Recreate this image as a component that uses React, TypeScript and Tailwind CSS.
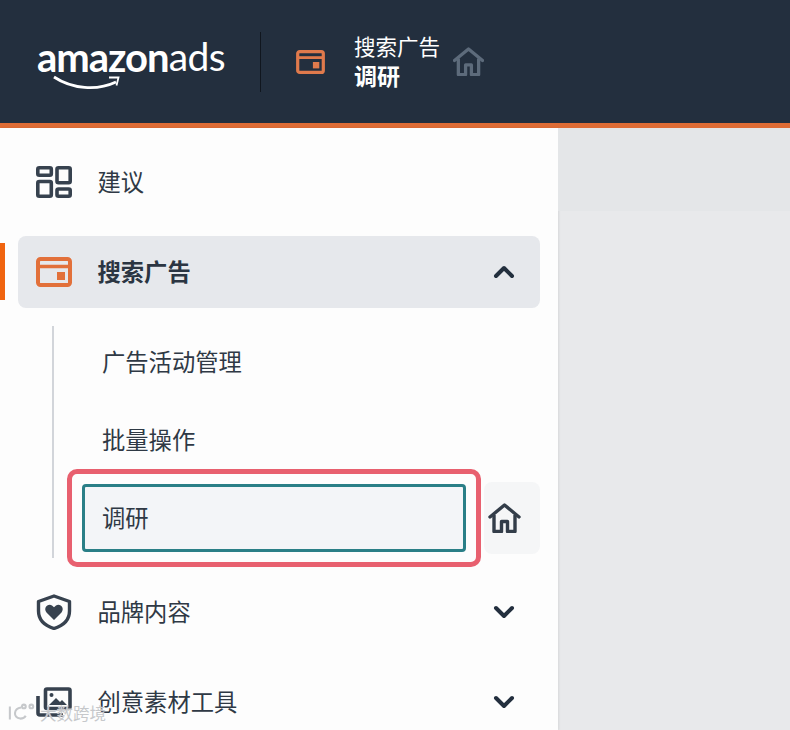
import React from "react";
import { ChevronDown, ChevronUp } from "lucide-react";

const CJK = "font-['Noto_Sans_CJK_SC','Noto_Sans',sans-serif]";

function CardIcon({ className }: { className?: string }) {
  return (
    <svg viewBox="0 0 36 30" className={className} fill="none">
      <rect x="2" y="2" width="32" height="26" rx="2.500" stroke="currentColor" strokeWidth="4" />
      <path d="M2 9.500h32" stroke="currentColor" strokeWidth="3.500" />
      <rect x="21" y="15" width="8" height="8" fill="currentColor" />
    </svg>
  );
}

function HomeIcon({ className }: { className?: string }) {
  return (
    <svg viewBox="0 0 32 30" className={className} fill="none" stroke="currentColor" strokeWidth="3.400" strokeLinejoin="round">
      <path d="M1.500 14 16 2l14.500 12" strokeLinecap="round" />
      <path d="M5.500 12v16.500h7.500V18.500h6v10h7.500V12" />
    </svg>
  );
}

function GridIcon({ className }: { className?: string }) {
  return (
    <svg viewBox="0 0 36 32" className={className} fill="none" stroke="currentColor" strokeWidth="3.600">
      <rect x="1.800" y="1.800" width="13.500" height="7.500" rx="1.500" />
      <rect x="1.800" y="15.500" width="13.500" height="14.700" rx="1.500" />
      <rect x="21" y="1.800" width="13.200" height="15" rx="1.500" />
      <rect x="21" y="23" width="13.200" height="7.200" rx="1.500" />
    </svg>
  );
}

function ShieldIcon({ className }: { className?: string }) {
  return (
    <svg viewBox="0 0 36 36" className={className} fill="none">
      <path
        d="M18 2 33.500 7.500V17c0 8.500-6 14.500-15.500 17.500C8.500 31.500 2.500 25.500 2.500 17V7.500Z"
        stroke="currentColor"
        strokeWidth="3.400"
        strokeLinejoin="round"
      />
      <path
        d="M18 26 10.500 18.500c-3.500-4 1-9.500 5.500-7l2 1.800 2-1.800c4.500-2.500 9 3 5.500 7Z"
        fill="currentColor"
      />
    </svg>
  );
}

function ImagesIcon({ className }: { className?: string }) {
  return (
    <svg viewBox="0 0 36 30" className={className} fill="none">
      <rect x="9.500" y="2" width="24.500" height="19.500" rx="1.500" stroke="currentColor" strokeWidth="3.600" />
      <path d="M2 9v17a2 2 0 0 0 2 2H27" stroke="currentColor" strokeWidth="3.600" />
      <circle cx="15.500" cy="8" r="2" fill="currentColor" />
      <path d="M13 18 20 11l4 4 2-2 5 5Z" fill="currentColor" />
    </svg>
  );
}

function NavRow({
  icon,
  label,
  open,
  height,
}: {
  icon: React.ReactNode;
  label: string;
  open?: boolean;
  height: string;
}) {
  return (
    <div className={`flex items-center pl-9 pr-[38px] ${height}`}>
      <span className="w-[61.500px] text-[#37424f]">{icon}</span>
      <span className="flex-1 pb-[2px] text-[23.300px] text-[#2f3945]">{label}</span>
      {open !== undefined && <ChevronDown size={32} strokeWidth={3} className="text-[#232f3e]" />}
    </div>
  );
}

function Header() {
  return (
    <header className="flex h-[128px] shrink-0 items-center border-b-[5px] border-[#de6c35] bg-[#232f3e] pl-[37px] shadow-[0_2px_4px_rgba(226,112,58,0.25)]">
      <div className="relative flex h-[60px] w-[187px] items-center pb-[10px] font-['Lato',sans-serif] text-[40px] leading-none text-white">
        <span className="font-bold tracking-[-1px]">amazon</span>
        <span className="text-[39px] tracking-[-0.6px]">ads</span>
        <svg viewBox="0 0 72 16" className="absolute left-[16px] top-[43px] h-[16px] w-[72px]" fill="none" stroke="white">
          <path d="M1 2c18 12 43 14 62 5" strokeWidth="2.800" />
          <path d="M56 2.500l9.500 0-2 8" strokeWidth="1.800" />
        </svg>
      </div>
      <div className="ml-[36px] h-[60px] w-px bg-[#10161e]" />
      <CardIcon className="ml-[34px] h-[24px] w-[31px] text-[#e07a4c]" />
      <div className="ml-[28px] flex flex-col pb-[3px] text-white">
        <span className="text-[21.500px] leading-[30px]">搜索广告</span>
        <span className="-mt-[1px] text-[23px] leading-[30px] font-bold">调研</span>
      </div>
      <HomeIcon className="ml-[13px] h-[29px] w-[31px] text-[#5d6b7b]" />
    </header>
  );
}

export default function App() {
  return (
    <div className={`relative flex h-[730px] w-[790px] flex-col overflow-hidden bg-[#e8e9eb] ${CJK}`}>
      <Header />
      <div className="flex min-h-0 flex-1">
        <aside className="w-[558px] shrink-0 bg-[#fdfdfd] shadow-[1px_0_2px_rgba(0,0,0,0.08)]">
          <NavRow height="h-[108px]" label="建议" icon={<GridIcon className="h-[32px] w-[36px]" />} />

          <div className="relative ml-[18px] flex h-[72px] w-[522px] items-center rounded-[8px] bg-[#e6e8ec] pl-[18px] pr-[20px]">
            <span className="absolute -left-[18px] top-[7px] h-[57px] w-[5px] bg-[#f0640f]" />
            <CardIcon className="h-[30px] w-[36px] text-[#e2703a]" />
            <span className="ml-[25.500px] flex-1 pb-[2px] text-[23.300px] font-bold text-[#2b3542]">搜索广告</span>
            <ChevronUp size={32} strokeWidth={3} className="text-[#232f3e]" />
          </div>

          <div className="ml-[52px] mt-[18px] flex h-[232px] flex-col gap-[6px] border-l-2 border-[#d2d5da] pb-1">
            <div className="flex h-[72px] shrink-0 items-center pb-[2px] pl-[48px] text-[23.300px] text-[#2f3945]">广告活动管理</div>
            <div className="flex h-[72px] shrink-0 items-center pb-[2px] pl-[48px] text-[23.300px] text-[#2f3945]">批量操作</div>
            <div className="flex h-[72px] shrink-0 items-center">
              <div className="relative my-px ml-[28px] flex h-[68px] w-[384px] items-center rounded-[4px] border-[3px] border-[#2a7f87] bg-[#f3f5f8] pb-[2px] pl-[17px] text-[23.300px] text-[#2f3945]">
                调研
                <span className="absolute -inset-[18px] rounded-[10px] border-[5px] border-[#e8606f]" />
              </div>
              <div className="ml-[18px] flex h-[72px] w-[56px] items-center rounded-[8px] bg-[#f5f6f7] pl-[4px]">
                <HomeIcon className="h-[30px] w-[33px] text-[#333d49]" />
              </div>
            </div>
          </div>

          <NavRow height="h-[108px]" label="品牌内容" open={false} icon={<ShieldIcon className="h-[36px] w-[36px]" />} />
          <NavRow height="h-[72px]" label="创意素材工具" open={false} icon={<ImagesIcon className="h-[30px] w-[36px]" />} />
        </aside>

        <main className="flex-1">
          <div className="h-[83px] bg-[#e4e6e8]" />
        </main>
      </div>

      {/* watermark on top of the shot */}
      <div className="absolute left-[8px] top-[703px] flex items-center gap-[4px] text-[16.500px] leading-5 text-[#c6c8cb] [text-shadow:0_0_1px_rgba(255,255,255,0.9)]">
        <svg viewBox="0 0 30 20" className="h-[20px] w-[28px]" fill="none" stroke="#c6c8cb" strokeWidth="2.200">
          <path d="M2 3v14M14 4C6 5 5 15 13 16c3 0 5-1 6-3" />
          <circle cx="17" cy="3" r="2" />
          <circle cx="25" cy="3" r="2" />
        </svg>
        <span>大数跨境</span>
      </div>
    </div>
  );
}
